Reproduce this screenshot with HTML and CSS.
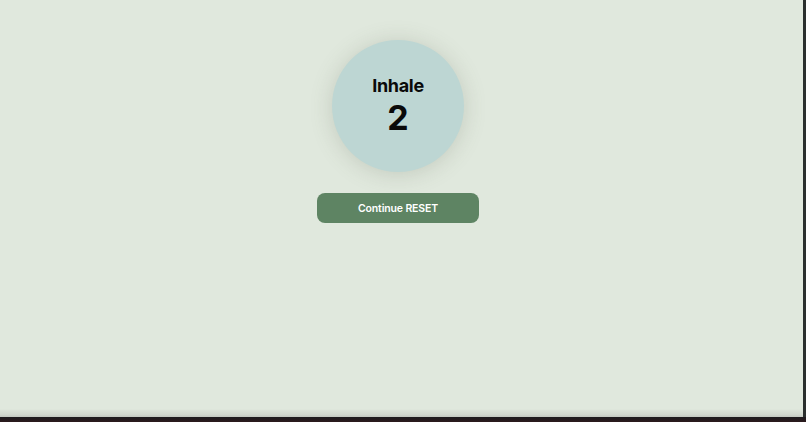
FILE: index.html
```html
<!DOCTYPE html>
<html>
<head>
<meta charset="utf-8">
<link rel="stylesheet" href="styles.css">
</head>
<body>
<div class="frame">
  <div class="window">
    <main class="app">
      <div class="circle">
        <div class="phase">Inhale</div>
        <div class="count">2</div>
      </div>
      <button class="btn">Continue RESET</button>
    </main>
    <div class="edge"></div>
  </div>
  <div class="side"></div>
</div>
<div class="dock"></div>
</body>
</html>
```
FILE: styles.css
```css
html, body {
  margin: 0;
  padding: 0;
  width: 806px;
  height: 422px;
  overflow: hidden;
  background: #2a1d20;
  font-family: Inter, "Noto Sans", sans-serif;
}
.frame {
  display: flex;
  height: 417px;
}
.window {
  width: 803px;
  height: 417px;
  background: #e0e8dd;
  display: flex;
  flex-direction: column;
}
.side {
  width: 3px;
  background: #2b2f2e;
}
.app {
  flex: 1;
  width: 796px;
  display: flex;
  flex-direction: column;
  align-items: center;
  padding-top: 40px;
  box-sizing: border-box;
}
.circle {
  width: 132px;
  height: 132px;
  border-radius: 50%;
  background: #bdd6d3;
  box-shadow: 0 2px 22px rgba(90, 100, 80, 0.22);
  display: flex;
  flex-direction: column;
  align-items: center;
  padding-top: 35px;
  box-sizing: border-box;
  color: #0a0a0a;
}
.phase {
  font-size: 18px;
  font-weight: 700;
  line-height: 22px;
  letter-spacing: -0.3px;
}
.count {
  font-size: 34px;
  font-weight: 700;
  line-height: 36px;
  margin-top: 3px;
}
.btn {
  margin-top: 21px;
  width: 162px;
  height: 30px;
  border: none;
  border-radius: 8px;
  background: #5e8463;
  color: #ffffff;
  font-family: Inter, Roboto, sans-serif;
  font-size: 10.5px;
  font-weight: 600;
  letter-spacing: -0.15px;
  padding: 1px 0 0;
}
.edge {
  height: 8px;
  background: linear-gradient(#dfe7dc, #d2d8cf 70%, #c4c9c1);
}
.dock {
  height: 5px;
  background: linear-gradient(#1e1c1f, #2c1a1d);
}
```
